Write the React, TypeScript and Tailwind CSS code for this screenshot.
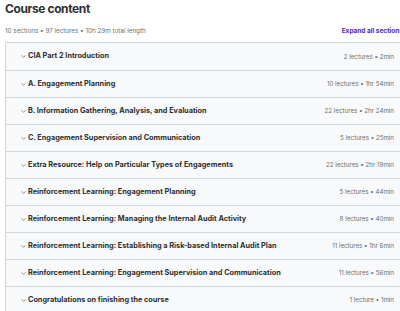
import React from "react";

const sections: [string, string][] = [
  ["CIA Part 2 Introduction", "2 lectures • 2min"],
  ["A. Engagement Planning", "10 lectures • 1hr 54min"],
  ["B. Information Gathering, Analysis, and Evaluation", "22 lectures • 2hr 24min"],
  ["C. Engagement Supervision and Communication", "5 lectures • 25min"],
  ["Extra Resource: Help on Particular Types of Engagements", "22 lectures • 2hr 19min"],
  ["Reinforcement Learning: Engagement Planning", "5 lectures • 44min"],
  ["Reinforcement Learning: Managing the Internal Audit Activity", "8 lectures • 40min"],
  ["Reinforcement Learning: Establishing a Risk-based Internal Audit Plan", "11 lectures • 1hr 6min"],
  ["Reinforcement Learning: Engagement Supervision and Communication", "11 lectures • 56min"],
  ["Congratulations on finishing the course", "1 lecture • 1min"],
];

function Chevron() {
  return (
    <svg width="7" height="7" viewBox="0 0 24 24" fill="none" stroke="#6a6f73" strokeWidth="2.5" strokeLinecap="round" strokeLinejoin="round">
      <path d="M6 9l6 6 6-6" />
    </svg>
  );
}

export default function App() {
  return (
    <div className="w-[400px] h-[311px] overflow-hidden bg-white" style={{ fontFamily: "Inter, 'Noto Sans', sans-serif" }}>
      <div className="w-[403px] pl-[5px]">
        <div className="h-[16px] pt-[3px]">
          <h2 className="text-[12px] leading-[12px] font-bold text-[#2d2f31] tracking-[-0.4px]">Course content</h2>
        </div>
        <div className="flex items-center justify-between mt-[10px] h-[12px]">
          <span className="text-[6.3px] text-[#6a6f73]">10 sections • 97 lectures • 10h 29m total length</span>
          <span className="text-[6.5px] font-bold text-[#5624d0] whitespace-nowrap">Expand all sections</span>
        </div>
        <div className="mt-[4px] border border-[#d1d7dc]">
          {sections.map(([t, m], i) => (
            <div
              key={i}
              className={`flex items-center h-[27px] bg-[#f7f9fa] pl-[14px] pr-[8px] ${i > 0 ? "border-t border-[#d1d7dc]" : ""}`}
            >
              <Chevron />
              <span className="ml-[1px] text-[7.3px] font-bold text-[#2d2f31] whitespace-nowrap">{t}</span>
              <span className="ml-auto text-[6.2px] text-[#6a6f73] whitespace-nowrap">{m}</span>
            </div>
          ))}
        </div>
      </div>
    </div>
  );
}
